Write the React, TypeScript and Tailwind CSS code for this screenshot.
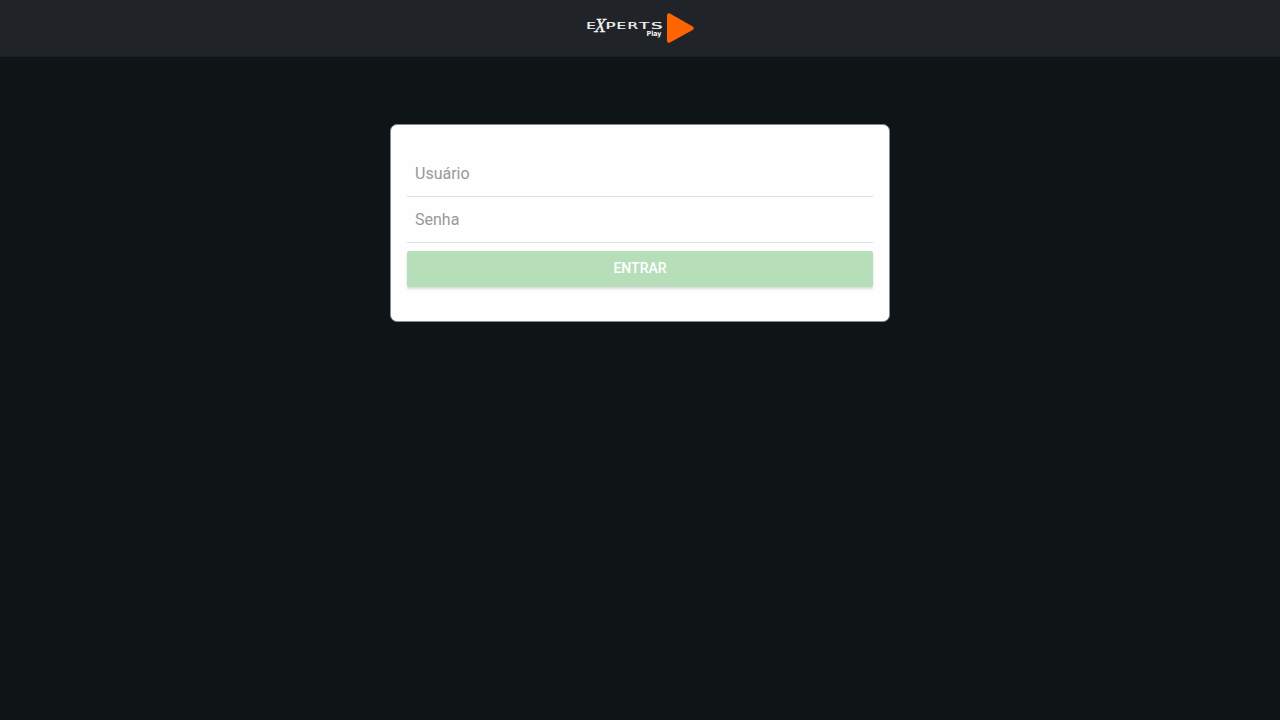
import { useState } from 'react';

// wide letters of the wordmark: glyph, left edge, drawn width
const letters: [string, number, number][] = [
  ['E', 0.2, 9.5],
  ['P', 19.5, 10],
  ['E', 30.5, 9.5],
  ['R', 41.5, 10.5],
  ['T', 53.2, 10],
  ['S', 65, 11.5],
];

function Logo() {
  return (
    <svg width="108" height="32" viewBox="0 0 108 32" aria-label="Experts Play">
      <g fill="#f4f5f5" fontFamily="'DejaVu Sans', sans-serif">
        {letters.map(([char, x, width]) => (
          <text
            key={x}
            x={x}
            y="16.8"
            fontSize="8"
            stroke="#f4f5f5"
            strokeWidth="0.2"
            textLength={width}
            lengthAdjust="spacingAndGlyphs"
          >
            {char}
          </text>
        ))}
        <text
          x="8.5"
          y="19.5"
          fontFamily="'Liberation Serif', serif"
          fontSize="19"
          fontStyle="italic"
          stroke="#f4f5f5"
          strokeWidth="0.3"
          textLength="11.5"
          lengthAdjust="spacingAndGlyphs"
        >
          X
        </text>
        <text
          x="60.5"
          y="23.8"
          fontSize="7"
          fontWeight="700"
          textLength="15"
          lengthAdjust="spacingAndGlyphs"
        >
          Play
        </text>
      </g>
      <path
        d="M83 3.2 L105.7 16.2 L83 28.8 Z"
        fill="#ff6400"
        stroke="#ff6400"
        strokeWidth="4"
        strokeLinejoin="round"
      />
    </svg>
  );
}

interface FieldProps {
  type: string;
  placeholder: string;
  value: string;
  onChange: (value: string) => void;
}

function Field({ type, placeholder, value, onChange }: FieldProps) {
  return (
    <input
      type={type}
      placeholder={placeholder}
      value={value}
      onChange={(e) => onChange(e.target.value)}
      className="block h-[46px] w-full border-b border-[#dedede] px-2 text-base text-black outline-none placeholder:text-[#999]"
    />
  );
}

export default function App() {
  const [user, setUser] = useState('');
  const [password, setPassword] = useState('');

  return (
    <div className="min-h-screen bg-[#0f1416] font-['Roboto',sans-serif]">
      <header className="flex h-[57px] justify-center border-b border-[#1b1f22] bg-[#202328] pt-3">
        <Logo />
      </header>

      <main className="flex justify-center pt-[67px]">
        <form
          className="h-[198px] w-[500px] rounded-[7px] border border-[#85898b] bg-[#fefefe] px-4 pt-[26px]"
          onSubmit={(e) => e.preventDefault()}
        >
          <Field type="text" placeholder="Usuário" value={user} onChange={setUser} />
          <Field type="password" placeholder="Senha" value={password} onChange={setPassword} />
          <button
            type="submit"
            disabled={!user || !password}
            className="mt-2 block h-9 w-full rounded-[2px] bg-[#b6dfb9] pb-0.5 text-sm font-medium text-white shadow-[0_2px_3px_rgba(0,0,0,0.14)]"
          >
            ENTRAR
          </button>
        </form>
      </main>
    </div>
  );
}
